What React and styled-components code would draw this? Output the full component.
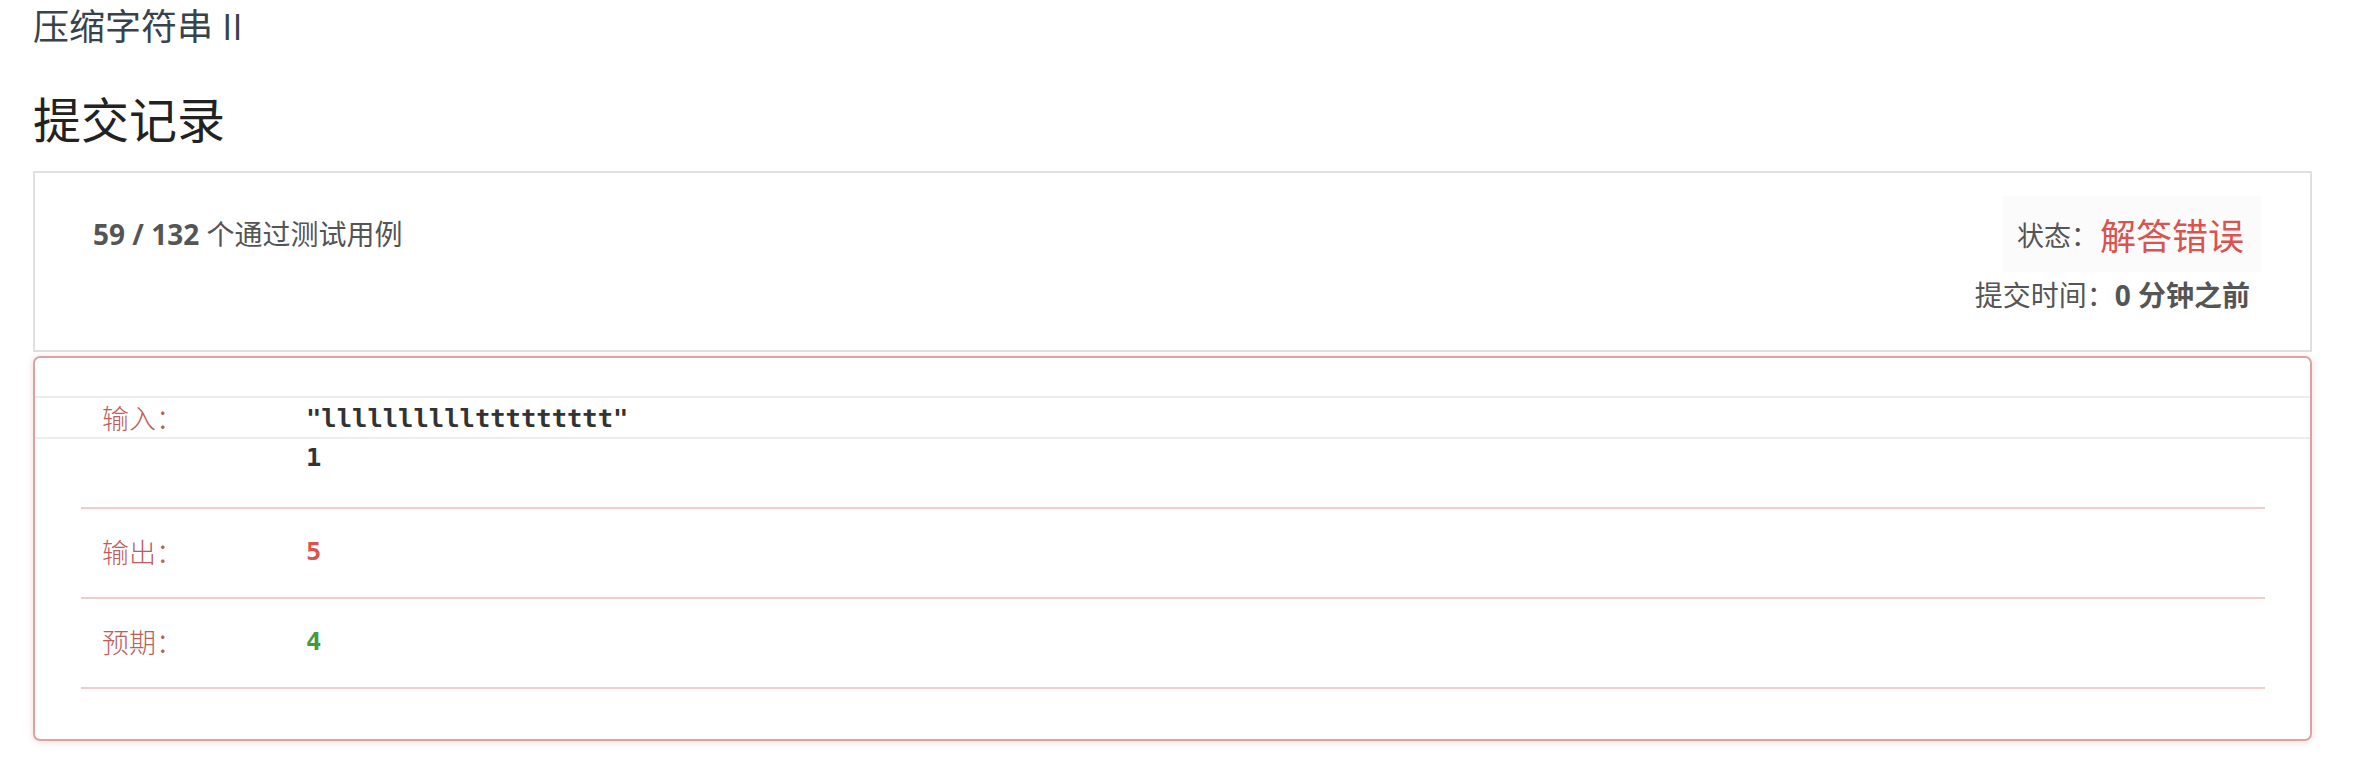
import React from "react";
import styled, { createGlobalStyle } from "styled-components";

const GlobalStyle = createGlobalStyle`
  body {
    margin: 0;
    background: #fff;
    font-family: "Open Sans", "Noto Sans CJK SC", sans-serif;
    color: #555;
  }
`;

const Page = styled.div`
  padding: 7px 45px 40px 33px;
`;

const ProblemTitle = styled.div`
  font-size: 36px;
  line-height: 40px;
  color: #37424a;
`;

const Heading = styled.h1`
  margin: 46px 0 24px;
  font-size: 48px;
  line-height: 54px;
  font-weight: 400;
  color: #222;
`;

const SummaryPanel = styled.div`
  border: 2px solid #e0e0e0;
  display: grid;
  grid-template-columns: 1fr auto;
  padding: 23px 49px 35px 58px;
`;

const Passed = styled.div`
  align-self: center;
  font-size: 28px;
  line-height: 40px;
  color: #555;

  b {
    font-weight: 700;
  }
`;

const StatusBox = styled.div`
  justify-self: end;
  background: #fcfbfb;
  height: 76px;
  padding: 0 17px 0 14px;
  display: flex;
  align-items: center;
  font-size: 27px;
`;

const StatusText = styled.span`
  font-size: 36px;
  color: #d9534f;
  margin-left: 2px;
`;

const SubmitTime = styled.div`
  grid-column: 2;
  text-align: right;
  padding-right: 11px;
  font-size: 28px;
  line-height: 40px;
  margin-top: 3px;

  b {
    font-weight: 700;
  }
`;

const ResultPanel = styled.div`
  margin-top: 4px;
  border: 2px solid #d9a3a3;
  border-radius: 7px;
  box-shadow: 0 1px 7px rgba(200, 110, 110, 0.25);
  padding: 38px 0 50px;
`;

const InputBand = styled.div`
  display: flex;
  align-items: center;
  height: 39px;
  border-top: 2px solid #ededed;
  border-bottom: 2px solid #ededed;
  padding-left: 67px;
`;

const Label = styled.span`
  width: ${(p) => p.$width}px;
  flex-shrink: 0;
  font-family: "Noto Sans CJK SC", sans-serif;
  font-size: 27px;
  font-weight: 300;
  color: #b8605b;
`;

const Value = styled.span`
  font-family: "DejaVu Sans Mono", "Liberation Mono", monospace;
  font-weight: 700;
  font-size: 25.5px;
  color: ${(p) => p.$color || "#333"};
`;

const ExtraLine = styled.div`
  padding-left: 271px;
  height: 68px;
  line-height: 36px;
`;

const Table = styled.div`
  margin: 0 45px 0 46px;
  border-bottom: 2px solid #f0cccc;
`;

const Row = styled.div`
  display: flex;
  align-items: center;
  height: ${(p) => p.$height}px;
  padding: 0 0 4px 21px;
  border-top: 2px solid #f0cccc;
`;

export default function App() {
  return (
    <Page>
      <GlobalStyle />
      <ProblemTitle>压缩字符串 II</ProblemTitle>
      <Heading>提交记录</Heading>

      <SummaryPanel>
        <Passed>
          <b>59 / 132</b> 个通过测试用例
        </Passed>
        <StatusBox>
          状态：<StatusText>解答错误</StatusText>
        </StatusBox>
        <SubmitTime>
          提交时间：<b>0 分钟之前</b>
        </SubmitTime>
      </SummaryPanel>

      <ResultPanel>
        <InputBand>
          <Label $width={204}>输入：</Label>
          <Value>"llllllllllttttttttt"</Value>
        </InputBand>
        <ExtraLine>
          <Value>1</Value>
        </ExtraLine>
        <Table>
          <Row $height={84}>
            <Label $width={204}>输出：</Label>
            <Value $color="#d9534f">5</Value>
          </Row>
          <Row $height={84}>
            <Label $width={204}>预期：</Label>
            <Value $color="#3e9a43">4</Value>
          </Row>
        </Table>
      </ResultPanel>
    </Page>
  );
}
